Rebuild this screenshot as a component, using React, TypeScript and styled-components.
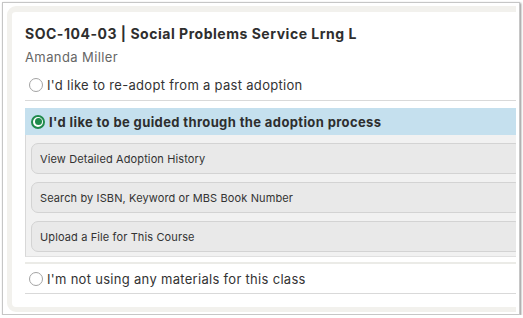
import React from "react";
import styled, { createGlobalStyle } from "styled-components";

const Global = createGlobalStyle`
  html, body { margin: 0; padding: 0; background: #ffffff; }
  body { font-family: Inter, "Open Sans", Arial, sans-serif; color: #333; }
  * { box-sizing: border-box; }
`;

const Frame = styled.div`
  margin: 2px 0 0 2px;
  width: 518px;
  height: 313px;
  border: 1px solid #c6c6c6;
  box-shadow: 1px 1px 2px rgba(0, 0, 0, 0.45);
  background: #fff;
  padding: 3px 3px 2px 4px;
`;

const Viewport = styled.div`
  width: 100%;
  height: 100%;
  overflow: hidden;
`;

const Card = styled.div`
  width: 520px;
  height: 100%;
  background: #fff;
  border: 5px solid #f2f1ed;
  border-top-width: 6px;
  border-radius: 9px;
  padding: 12px 0 0 13px;
  display: flex;
  flex-direction: column;
`;

const Title = styled.div`
  font-size: 14px;
  font-weight: 700;
  line-height: 20px;
  letter-spacing: 0.52px;
  color: #2e2e2e;
  white-space: nowrap;
`;

const Instructor = styled.div`
  margin-top: 4px;
  font-size: 13px;
  line-height: 18px;
  letter-spacing: 0.4px;
  color: #666;
`;

const Options = styled.div`
  margin-top: 4px;
  display: flex;
  flex-direction: column;
`;

const OptionRow = styled.div<{ $topRule?: boolean }>`
  height: ${(p) => (p.$topRule ? 32 : 31)}px;
  display: flex;
  align-items: center;
  padding-left: 4px;
  border-bottom: 1px solid #d9d9d9;
  border-top: ${(p) => (p.$topRule ? "2px solid #ebebe7" : "none")};
  margin-top: ${(p) => (p.$topRule ? "5px" : "0")};
  font-size: 13px;
  letter-spacing: 0.3px;
  color: #333;
  white-space: nowrap;
`;

const Selected = styled.div`
  margin-top: 7px;
  display: flex;
  flex-direction: column;
`;

const SelectedHeader = styled.div`
  height: 27px;
  display: flex;
  align-items: center;
  padding-left: 6px;
  background: #c5e0ee;
  font-size: 13px;
  font-weight: 700;
  letter-spacing: 0.38px;
  color: #2e2e2e;
  white-space: nowrap;
`;

const ActionPanel = styled.div`
  background: #f1f1f1;
  border-left: 1px solid #d8d8d8;
  border-bottom: 1px solid #e0e0e0;
  padding: 8px 0 4px 5px;
  display: flex;
  flex-direction: column;
  gap: 8px;
`;

const ActionButton = styled.div`
  height: 31px;
  display: flex;
  align-items: center;
  padding-left: 8px;
  background: #e9e9e9;
  border: 1px solid #d3d3d3;
  border-radius: 7px;
  font-size: 11px;
  letter-spacing: 0.12px;
  color: #333;
  white-space: nowrap;
`;

const Radio = styled.span<{ $checked?: boolean }>`
  width: 14px;
  height: 14px;
  flex: none;
  border-radius: 50%;
  margin-right: 4px;
  background: #fff;
  border: ${(p) => (p.$checked ? "2px solid #1f8a4c" : "1.5px solid #a3a3a3")};
  display: flex;
  align-items: center;
  justify-content: center;
  &::after {
    content: "";
    display: ${(p) => (p.$checked ? "block" : "none")};
    width: 7px;
    height: 7px;
    border-radius: 50%;
    background: #1f8a4c;
  }
`;

export default function App() {
  return (
    <>
      <Global />
      <Frame>
        <Viewport>
          <Card>
            <Title>SOC-104-03 | Social Problems Service Lrng L</Title>
            <Instructor>Amanda Miller</Instructor>
            <Options>
              <OptionRow>
                <Radio />
                I'd like to re-adopt from a past adoption
              </OptionRow>
              <Selected>
                <SelectedHeader>
                  <Radio $checked />
                  I'd like to be guided through the adoption process
                </SelectedHeader>
                <ActionPanel>
                  <ActionButton>View Detailed Adoption History</ActionButton>
                  <ActionButton>Search by ISBN, Keyword or MBS Book Number</ActionButton>
                  <ActionButton>Upload a File for This Course</ActionButton>
                </ActionPanel>
              </Selected>
              <OptionRow $topRule>
                <Radio />
                I'm not using any materials for this class
              </OptionRow>
            </Options>
          </Card>
        </Viewport>
      </Frame>
    </>
  );
}
